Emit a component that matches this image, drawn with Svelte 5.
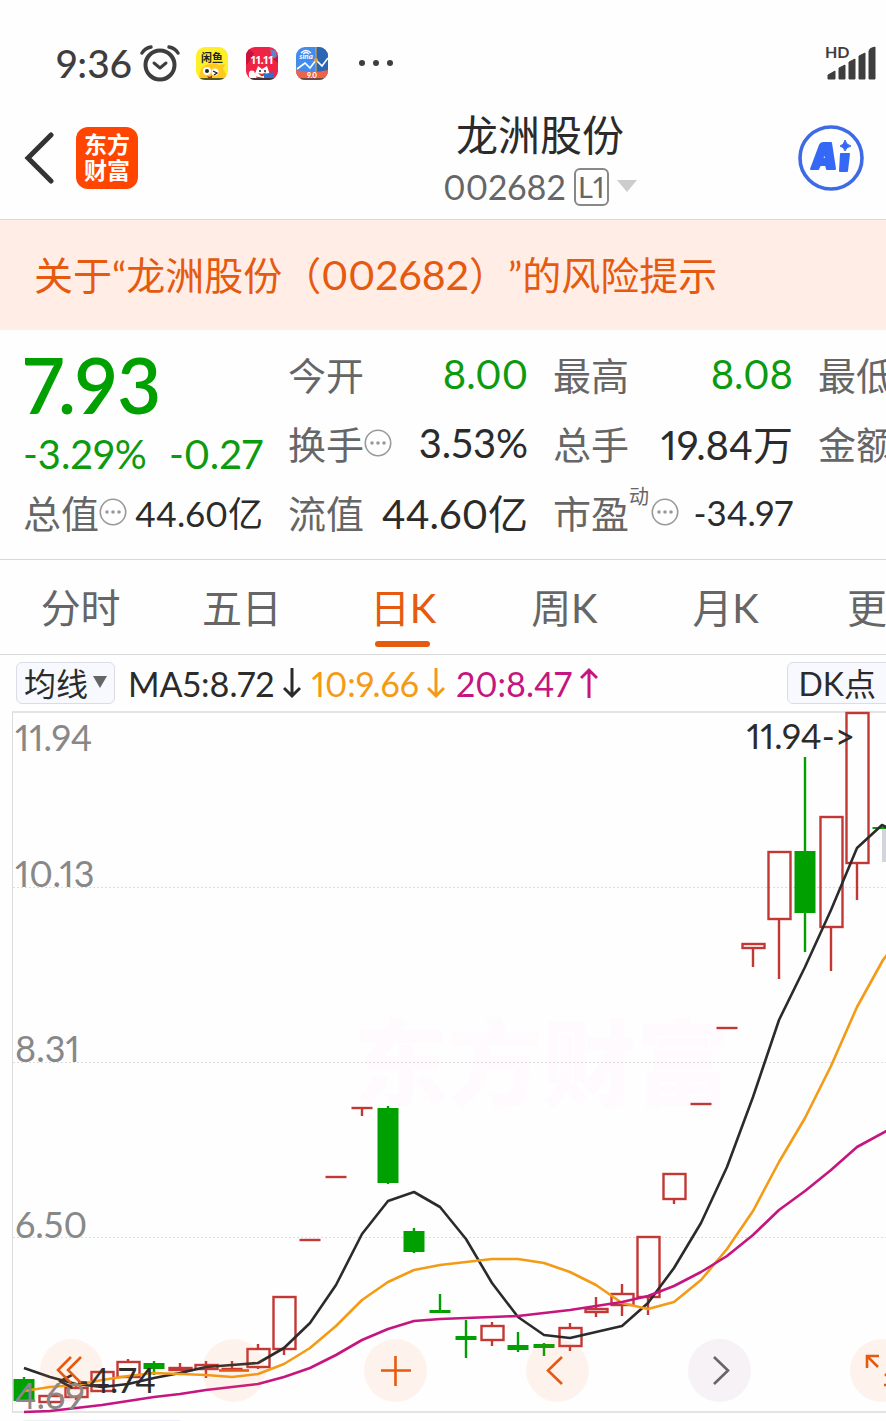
<script>
  let tabs = ["分时", "五日", "日K", "周K", "月K", "更多"];
  let active = $state("日K");

  // type: r = hollow red, g = solid green
  let candles = [
    { x: 24, top: 1379, bottom: 1401, high: 1377, low: 1402, type: "g" },
    { x: 50, top: 1396, bottom: 1402, high: 1393, low: 1406, type: "r" },
    { x: 76, top: 1388, bottom: 1397, high: 1384, low: 1400, type: "r" },
    { x: 102, top: 1372, bottom: 1391, high: 1371, low: 1392, type: "r" },
    { x: 128, top: 1362, bottom: 1377, high: 1359, low: 1378, type: "r" },
    { x: 154, top: 1363, bottom: 1369, high: 1361, low: 1375, type: "g" },
    { x: 180, top: 1368, bottom: 1370, high: 1363, low: 1371, type: "r" },
    { x: 206, top: 1365, bottom: 1369, high: 1361, low: 1378, type: "r" },
    { x: 232, top: 1369, bottom: 1369, high: 1361, low: 1370, type: "r" },
    { x: 258, top: 1349, bottom: 1367, high: 1344, low: 1369, type: "r" },
    { x: 284, top: 1297, bottom: 1349, high: 1297, low: 1355, type: "r" },
    { x: 310, top: 1240, bottom: 1240, high: 1240, low: 1240, type: "r" },
    { x: 336, top: 1177, bottom: 1177, high: 1177, low: 1177, type: "r" },
    { x: 362, top: 1108, bottom: 1108, high: 1108, low: 1116, type: "r" },
    { x: 388, top: 1108, bottom: 1183, high: 1106, low: 1184, type: "g" },
    { x: 414, top: 1231, bottom: 1252, high: 1228, low: 1253, type: "g" },
    { x: 440, top: 1310, bottom: 1313, high: 1294, low: 1313, type: "g" },
    { x: 466, top: 1336, bottom: 1340, high: 1320, low: 1358, type: "g" },
    { x: 492, top: 1326, bottom: 1340, high: 1322, low: 1346, type: "r" },
    { x: 518, top: 1345, bottom: 1350, high: 1332, low: 1352, type: "g" },
    { x: 544, top: 1344, bottom: 1348, high: 1343, low: 1356, type: "g" },
    { x: 570, top: 1328, bottom: 1346, high: 1323, low: 1351, type: "r" },
    { x: 596, top: 1309, bottom: 1312, high: 1297, low: 1317, type: "r" },
    { x: 622, top: 1294, bottom: 1305, high: 1284, low: 1316, type: "r" },
    { x: 648, top: 1237, bottom: 1297, high: 1237, low: 1315, type: "r" },
    { x: 674, top: 1174, bottom: 1199, high: 1174, low: 1204, type: "r" },
    { x: 701, top: 1104, bottom: 1104, high: 1104, low: 1104, type: "r" },
    { x: 727, top: 1028, bottom: 1028, high: 1028, low: 1028, type: "r" },
    { x: 753, top: 944, bottom: 948, high: 944, low: 967, type: "r" },
    { x: 779, top: 852, bottom: 919, high: 852, low: 979, type: "r" },
    { x: 805, top: 851, bottom: 913, high: 757, low: 952, type: "g" },
    { x: 831, top: 817, bottom: 927, high: 817, low: 971, type: "r" },
    { x: 857, top: 713, bottom: 863, high: 713, low: 900, type: "r" },
    { x: 883, top: 827, bottom: 829, high: 827, low: 829, type: "g" },
  ];

  let averages = [
    {
      color: "#2b2b2b",
      points: "24,1368 50,1377 76,1384 102,1387 128,1384 154,1378 180,1373 206,1367 232,1365 258,1363 284,1348 310,1323 336,1285 362,1234 388,1201 414,1192 440,1207 466,1239 492,1283 518,1317 544,1335 570,1338 596,1332 622,1326 648,1303 674,1268 701,1223 727,1167 753,1097 779,1020 805,967 831,910 857,848 882,825 890,829",
    },
    {
      color: "#f49b16",
      points: "24,1391 50,1387 76,1385 102,1380 128,1376 154,1373 180,1374 206,1375 232,1377 258,1374 284,1364 310,1348 336,1326 362,1300 388,1282 414,1270 440,1265 466,1262 492,1259 518,1259 544,1263 570,1272 596,1285 622,1303 648,1309 674,1302 701,1280 727,1249 753,1211 779,1162 805,1118 831,1066 857,1007 883,960 890,951",
    },
    {
      color: "#c5157f",
      points: "24,1412 50,1411 76,1408 102,1405 128,1401 154,1397 180,1394 206,1390 232,1387 258,1384 284,1377 310,1368 336,1355 362,1340 388,1329 414,1321 440,1319 466,1318 492,1317 518,1316 544,1313 570,1310 596,1306 622,1302 648,1296 674,1286 701,1272 727,1256 753,1235 779,1210 805,1191 831,1170 857,1147 890,1129",
    },
  ];

  let axis = [
    { label: "11.94", y: 751 },
    { label: "10.13", y: 887 },
    { label: "8.31", y: 1062 },
    { label: "6.50", y: 1238 },
    { label: "4.69", y: 1409 },
  ];

  let tools = [
    { name: "快速左移", d: "M31 18 18 31 31 44M41 18 28 31 41 44" },
    { name: "缩小", d: "M17 31.5H47" },
    { name: "放大", d: "M17 31.5H47M31.5 17V47" },
    { name: "左移", d: "M36 18 22 31.5 36 45" },
    { name: "右移", d: "M26 18 40 31.5 26 45", gray: true },
    { name: "全屏", d: "M17 29V17H29M17 17 28 28M46 34V46H34M46 46 35 35" },
  ];
</script>

{#snippet info()}
  <svg class="info" viewBox="0 0 28 28" aria-hidden="true">
    <circle cx="14" cy="14" r="12.7" fill="none" stroke="#999" stroke-width="1.6" />
    <circle cx="8" cy="14" r="1.8" fill="#999" />
    <circle cx="14" cy="14" r="1.8" fill="#999" />
    <circle cx="20" cy="14" r="1.8" fill="#999" />
  </svg>
{/snippet}

{#snippet arrow(up)}
  <svg class="arrow" viewBox="0 0 18 32" fill="none" stroke="currentColor" stroke-width="3">
    {#if up}
      <path d="M9 31V3M1 11 9 3 17 11" />
    {:else}
      <path d="M9 1V29M1 21 9 29 17 21" />
    {/if}
  </svg>
{/snippet}

<div class="app">
  <div class="status">
    <span class="time">9:36</span>
    <svg width="40" height="38" viewBox="0 0 40 38" fill="none" stroke="#3e3e3e" stroke-width="4" stroke-linecap="round" stroke-linejoin="round">
      <circle cx="20" cy="21" r="14.5" />
      <path d="M14 19 20 24 26 19" stroke-width="3" />
      <path d="M2 9Q5 4 11 3M38 9Q35 4 29 3" stroke-width="3.4" />
    </svg>
    <div class="notices">
      <svg width="32" height="33" viewBox="0 0 32 33">
        <clipPath id="sq"><rect width="32" height="33" rx="9" /></clipPath>
        <g clip-path="url(#sq)">
          <rect width="32" height="33" fill="#fdf02b" />
          <path d="M3 33Q3 18 14 17Q20 15 23 18L29 17L27 22Q31 26 30 33Z" fill="#ffc91f" />
          <text x="16" y="15" font-size="11" font-weight="700" text-anchor="middle" fill="#222">闲鱼</text>
          <circle cx="11" cy="24" r="4" fill="#fff" />
          <circle cx="19" cy="25" r="3.5" fill="#fff" />
          <circle cx="11" cy="24" r="2" fill="#222" />
          <path d="M17 24 21 26 18 28" fill="none" stroke="#222" stroke-width="1.3" />
          <path d="M11 29Q15 31 16 28Q17 33 13 32Z" fill="#c51c1c" />
          <rect y="31" width="32" height="2" fill="#555a18" />
        </g>
      </svg>
      <svg width="32" height="33" viewBox="0 0 32 33">
        <g clip-path="url(#sq)">
          <rect width="32" height="33" fill="#ef2445" />
          <path d="M24 2 30 4 31 13 26 10Z" fill="#5b86cf" />
          <path d="M0 0 8 6 3 15 0 18ZM27 12 32 16V9Z" fill="#c9133c" />
          <text x="16" y="17" font-size="12" font-weight="900" text-anchor="middle" fill="#fff">11.11</text>
          <path d="M8 29 12 19 16 22 21 19 24 28 18 31Z" fill="#fff" />
          <path d="M3 29Q2 22 8 24L11 32H4Z" fill="#fff" />
          <circle cx="14" cy="24" r="1" fill="#222" />
          <circle cx="19" cy="24" r="1" fill="#222" />
          <path d="M12 26Q17 28 20 25Q19 30 15 29Z" fill="#e0332e" />
          <path d="M18 27 28 25V32H18Z" fill="#316fd4" />
          <rect y="31" width="32" height="2" fill="#47332d" />
        </g>
      </svg>
      <svg width="32" height="33" viewBox="0 0 32 33">
        <g clip-path="url(#sq)">
          <rect width="32" height="33" fill="#438ceb" />
          <path d="M20 0H32V25H20Z" fill="#2b66b4" />
          <path d="M1 22 9 16 14 21 20 13 26 19 32 11" fill="none" stroke="#fff" stroke-width="1.6" />
          <path d="M20 0V25" stroke="#d0a44a" stroke-width="1.2" />
          <circle cx="20" cy="13" r="2" fill="#e6a13a" />
          <path d="M5 6Q10 1 15 6M7 7Q10 4 13 7" fill="none" stroke="#fff" stroke-width="1.2" />
          <text x="10" y="12" font-size="8" font-style="italic" font-weight="700" text-anchor="middle" fill="#fff">sina</text>
          <path d="M0 23Q16 27 32 23V33H0Z" fill="#ee6347" />
          <rect y="31" width="32" height="2" fill="#6b4b42" />
          <text x="16" y="31" font-size="7" font-weight="900" text-anchor="middle" fill="#fff">9.0</text>
        </g>
      </svg>
    </div>
    <svg width="36" height="8" viewBox="0 0 36 8" fill="#3e3e3e">
      <circle cx="4" cy="4" r="3" />
      <circle cx="18" cy="4" r="3" />
      <circle cx="32" cy="4" r="3" />
    </svg>
    <svg class="signal" width="52" height="36" viewBox="0 0 52 36" fill="#3e3e3e">
      <text x="1" y="13" font-size="16" font-weight="700">HD</text>
      <path d="M4 34V30L11 26V34ZM15 34V23L21 20V34ZM25 34V17L31 14V34ZM35 34V11L41 8V34ZM45 34V6Q45 3 51 2V34Z" stroke="#3e3e3e" stroke-linejoin="round" />
    </svg>
  </div>

  <header>
    <button class="back" aria-label="返回">
      <svg width="30" height="52" viewBox="0 0 30 52" fill="none" stroke="#333" stroke-width="5" stroke-linecap="round">
        <path d="M27 3 4 26 27 49" />
      </svg>
    </button>
    <div class="logo"><span>东方</span><span>财富</span></div>
    <div class="title">
      <h1>龙洲股份</h1>
      <div class="code">
        <span>002682</span>
        <span class="level">L1</span>
        <svg width="20" height="13" viewBox="0 0 20 13"><path d="M0 0H20L10 12Z" fill="#ccc" /></svg>
      </div>
    </div>
    <button class="ai" aria-label="Ai">
      <svg width="66" height="66" viewBox="0 0 66 66" fill="#3568f5">
        <circle cx="33" cy="33" r="31" fill="none" stroke="#3e6ae6" stroke-width="3.6" />
        <path fill-rule="evenodd" d="M13 44 22 20Q23 18 25 18H33L37 44H29L28 40H22L20 44ZM24 34H28L27 27Z" stroke="#3568f5" stroke-width="2" stroke-linejoin="round" />
        <path d="M43 29H51L49 46H42Z" stroke="#3568f5" stroke-width="2" stroke-linejoin="round" />
        <path d="M47 15Q48 20 53 21Q48 22 47 26Q46 22 42 21Q46 20 47 15Z" stroke="#3568f5" />
      </svg>
    </button>
  </header>

  <a class="alert" href="#risk">关于“龙洲股份（<b>002682</b>）”的风险提示</a>

  <section class="quote">
    <div class="price">7.93</div>
    <div class="cell"><span>今开</span><strong class="down">8.00</strong></div>
    <div class="cell"><span>最高</span><strong class="down">8.08</strong></div>
    <div class="cell"><span>最低</span></div>

    <div class="cell change down"><strong>-3.29%</strong><strong>-0.27</strong></div>
    <div class="cell"><span>换手{@render info()}</span><strong>3.53%</strong></div>
    <div class="cell"><span>总手</span><strong>19.84万</strong></div>
    <div class="cell"><span>金额</span></div>

    <div class="cell"><span>总值{@render info()}</span><strong class="small">44.60亿</strong></div>
    <div class="cell"><span>流值</span><strong>44.60亿</strong></div>
    <div class="cell"><span>市盈<sup>动</sup>{@render info()}</span><strong class="small">-34.97</strong></div>
  </section>

  <nav>
    {#each tabs as tab}
      <button class:active={tab === active} onclick={() => (active = tab)}>{tab}</button>
    {/each}
  </nav>

  <div class="legend">
    <button class="pill">均线<svg width="14" height="13" viewBox="0 0 14 13"><path d="M0 0H14L7 12Z" fill="#666" /></svg></button>
    <span class="ma5">MA5:8.72{@render arrow(false)}</span>
    <span class="ma10">10:9.66{@render arrow(false)}</span>
    <span class="ma20">20:8.47{@render arrow(true)}</span>
    <button class="pill dk">DK点</button>
  </div>

  <main>
    <svg class="chart" viewBox="0 711 886 703">
      <text class="mark" x="354" y="1099">东方财富</text>
      <g stroke="#ddd" stroke-dasharray="2 2">
        <path d="M13 887.5H886M13 1062.5H886M13 1237.5H886" />
      </g>
      <path d="M12 712H886M12 1412H886" stroke="#e4e4e4" stroke-width="2" />
      <path d="M12.5 712V1412" stroke="#dcdcdc" />
      <rect x="882" y="829" width="4" height="33" fill="#d4d5dc" />

      {#each candles as c}
        {#if c.type === "g"}
          <path d="M{c.x} {c.high}V{c.low}" stroke="#00a000" stroke-width="2.4" />
          <rect x={c.x - 10.5} y={c.top} width="21" height={c.bottom - c.top} fill="#00a000" />
        {:else}
          <path d="M{c.x} {c.high}V{c.top}M{c.x} {c.bottom}V{c.low}" stroke="#c23835" stroke-width="2.4" />
          {#if c.top === c.bottom}
            <path d="M{c.x - 10.5} {c.top}H{c.x + 10.5}" stroke="#c23835" stroke-width="2.4" />
          {:else}
            <rect x={c.x - 10.5} y={c.top} width="22" height={c.bottom - c.top} fill="none" stroke="#c23835" stroke-width="2.4" />
          {/if}
        {/if}
      {/each}

      {#each averages as line}
        <polyline points={line.points} fill="none" stroke={line.color} stroke-width="2.6" stroke-linejoin="round" />
      {/each}

      {#each axis as a}
        <text class="axis" x="15" y={a.y}>{a.label}</text>
      {/each}
      <text class="extreme" x="855" y="749" text-anchor="end">11.94-&gt;</text>
      <text class="extreme" x="156" y="1393" text-anchor="end">&lt;-4.74</text>
    </svg>

    <div class="tools">
      {#each tools as tool}
        <button class:gray={tool.gray} aria-label={tool.name}>
          <svg width="63" height="63" viewBox="0 0 63 63" fill="none" stroke="currentColor" stroke-width="2.6"><path d={tool.d} /></svg>
        </button>
      {/each}
    </div>
  </main>

  <div class="next"></div>
</div>

<style>
  :global(body) {
    margin: 0;
    background: #fefefe;
  }

  .app {
    font-family: Lato, "Noto Sans CJK SC", sans-serif;
    font-variant-numeric: proportional-nums;
    color: #2b2b2b;
    overflow: hidden;
    height: 100vh;
  }

  button {
    font: inherit;
    color: inherit;
    background: none;
    border: 0;
    padding: 0;
    cursor: pointer;
  }

  svg {
    display: block;
    flex: none;
  }

  .status {
    display: flex;
    align-items: center;
    height: 64px;
    padding: 31px 10px 1px 56px;
  }

  .time {
    font-size: 39px;
    font-weight: 500;
    color: #3e3e3e;
    margin-right: 8px;
  }

  .notices {
    display: flex;
    gap: 18px;
    margin: 0 30px 0 16px;
  }

  .signal {
    margin-left: auto;
  }

  header {
    display: flex;
    align-items: center;
    height: 123px;
    padding: 0 22px 0 24px;
    border-bottom: 1px solid #d8d8d8;
  }

  .logo {
    box-sizing: border-box;
    display: flex;
    flex-direction: column;
    align-items: center;
    width: 62px;
    height: 62px;
    margin-left: 22px;
    padding-top: 4px;
    border-radius: 12px;
    background: #ff4500;
    color: #fff;
    font-size: 23px;
    font-weight: 700;
    line-height: 26px;
  }

  .title {
    flex: 1;
    padding: 2px 0 0 144px;
    text-align: center;
  }

  h1 {
    margin: 0;
    font-size: 42px;
    font-weight: 400;
    line-height: 56px;
  }

  .code {
    display: flex;
    align-items: center;
    justify-content: center;
    gap: 8px;
    height: 48px;
    font-size: 34px;
    color: #666;
  }

  .level {
    box-sizing: border-box;
    width: 35px;
    height: 38px;
    border: 2px solid #888;
    border-radius: 6px;
    font-size: 29px;
    line-height: 34px;
  }

  .alert {
    display: block;
    padding-left: 34px;
    background: #ffede6;
    color: #e65a10;
    font-size: 39px;
    line-height: 110px;
    white-space: nowrap;
    text-decoration: none;
    text-spacing-trim: space-all;
  }

  .alert b {
    font-size: 41px;
    font-weight: 400;
  }

  .quote {
    display: grid;
    grid-template-columns: repeat(4, 240px);
    grid-template-rows: repeat(3, 69px);
    column-gap: 25px;
    padding: 9px 0 13px 23px;
    border-bottom: 1px solid #d8d8d8;
  }

  .price {
    color: #00a000;
    font-size: 76px;
    font-weight: 600;
    line-height: 92px;
  }

  .cell {
    display: flex;
    align-items: center;
    justify-content: space-between;
    white-space: nowrap;
  }

  .change {
    padding-top: 22px;
  }

  .cell span {
    display: flex;
    align-items: center;
    color: #666;
    font-size: 38px;
  }

  .cell strong {
    font-size: 40px;
    font-weight: 400;
  }

  .cell .small {
    font-size: 35px;
  }

  .cell sup {
    align-self: flex-start;
    font-size: 20px;
    line-height: 24px;
    margin-right: 2px;
  }

  .down {
    color: #0c9a10;
  }

  .info {
    width: 28px;
    height: 28px;
  }

  nav {
    display: flex;
    height: 94px;
    border-bottom: 1px solid #d8d8d8;
  }

  nav button {
    position: relative;
    flex: 0 0 18.2%;
    padding-bottom: 2px;
    color: #666;
    font-size: 40px;
  }

  nav .active {
    color: #e65a10;
  }

  nav .active::after {
    content: "";
    position: absolute;
    left: 50%;
    bottom: 7px;
    width: 55px;
    height: 6px;
    margin-left: -28px;
    border-radius: 3px;
    background: #e65a10;
  }

  .legend {
    display: flex;
    align-items: center;
    height: 56px;
    padding-left: 16px;
    font-size: 34px;
    white-space: nowrap;
  }

  .legend span {
    display: flex;
    align-items: center;
    gap: 8px;
    margin-right: 11px;
  }

  .arrow {
    width: 18px;
    height: 32px;
  }

  .pill {
    display: flex;
    align-items: center;
    gap: 5px;
    box-sizing: border-box;
    height: 42px;
    margin-right: 13px;
    padding: 0 7px 2px;
    border: 1px solid #dcdce6;
    border-radius: 6px;
    background: #f7f9fe;
    font-size: 32px;
  }

  .dk {
    margin: 0 -8px 0 auto;
    padding: 0 17px 2px 10px;
  }

  .ma10 {
    color: #f49b16;
  }

  .ma20 {
    color: #c5157f;
  }

  main {
    position: relative;
  }

  .chart {
    width: 100%;
  }

  .mark {
    font-size: 94px;
    font-weight: 900;
    fill: #fefafe;
  }

  .axis {
    font-size: 36px;
    fill: #888;
  }

  .extreme {
    font-size: 35px;
    fill: #2b2b2b;
  }

  .tools {
    position: absolute;
    left: 40px;
    right: 0;
    bottom: 12px;
    display: flex;
    gap: 99px;
    overflow: hidden;
  }

  .tools button {
    border-radius: 50%;
    background: rgba(250, 120, 70, 0.09);
    color: #e65a10;
  }

  .tools .gray {
    background: #f6f2f6;
    color: #666;
  }

  .next {
    width: 164px;
    height: 42px;
    margin: 6px 0 0 20px;
    border-radius: 6px;
    background: #eeeef8;
  }
</style>
